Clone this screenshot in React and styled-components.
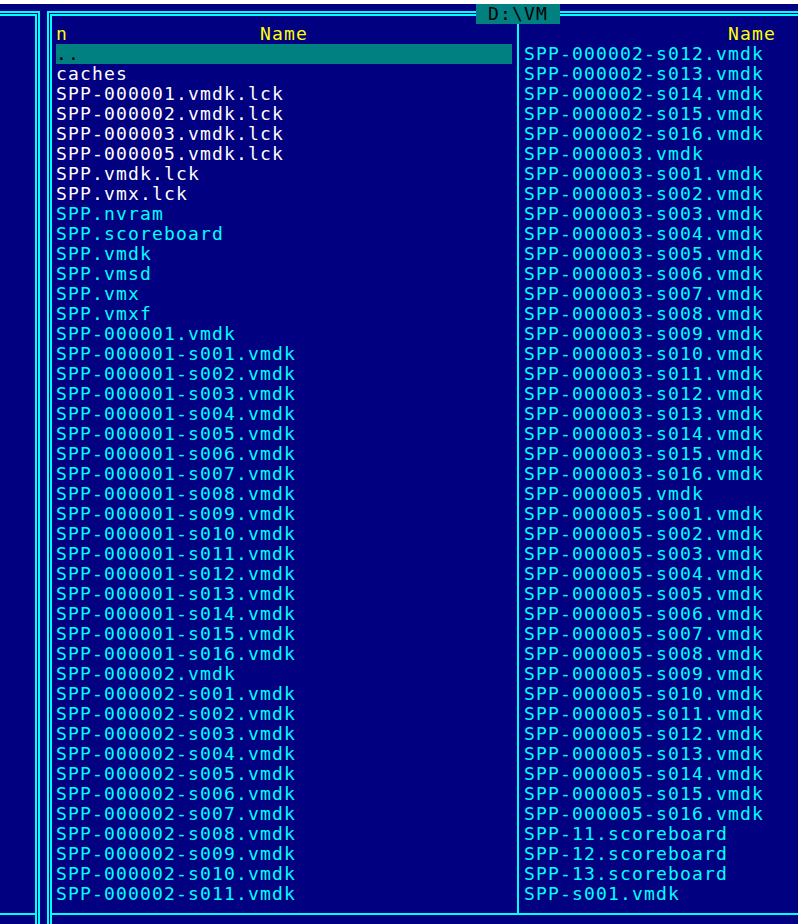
import styled, { createGlobalStyle } from 'styled-components';

const CYAN = '#00ffff';
const NAVY = '#000080';
const TEAL = '#008080';

// one straight stroke of a box-drawing glyph, drawn inside a 12x20 cell
const stroke = (x, y, w, h) =>
  `linear-gradient(${CYAN}, ${CYAN}) ${x} ${y} / ${w} ${h} no-repeat`;

const GlobalStyle = createGlobalStyle`
  html, body {
    margin: 0;
    background: #fff;
  }
`;

const Page = styled.div`
  padding-top: 4px;
`;

const Screen = styled.div`
  display: flex;
  height: 920px;
  overflow: hidden;
  background: ${NAVY};
  font-family: "DejaVu Sans Mono", "Liberation Mono", monospace;
  font-size: 18px;
  letter-spacing: 1.163px;
  line-height: 19px;
`;

const Stub = styled.div`
  flex: none;
  width: 44px;
  display: flex;
  flex-direction: column;
`;

const Panel = styled.div`
  flex: none;
  width: 948px;
  display: flex;
  flex-direction: column;
`;

const BorderRow = styled.div`
  flex: none;
  display: flex;
  height: 20px;
`;

const Middle = styled.div`
  flex: 1;
  display: flex;
  min-height: 0;
`;

const Gap = styled.div`
  flex: 1;
`;

const DoubleH = styled.div`
  flex: ${(p) => (p.$w ? 'none' : 1)};
  width: ${(p) => (p.$w ? `${p.$w}px` : 'auto')};
  background: ${stroke('0', '7px', '100%', '2px')}, ${stroke('0', '10px', '100%', '2px')};
`;

const SingleH = styled.div`
  flex: ${(p) => (p.$w ? 'none' : 1)};
  width: ${(p) => (p.$w ? `${p.$w}px` : 'auto')};
  background: ${stroke('0', '9px', '100%', '2px')};
`;

const DoubleV = styled.div`
  flex: none;
  width: 12px;
  background: ${stroke('3px', '0', '2px', '100%')}, ${stroke('6px', '0', '2px', '100%')};
`;

const SingleV = styled.div`
  flex: none;
  width: 12px;
  background: ${stroke('5px', '0', '2px', '100%')};
`;

const Cell = styled.div`
  flex: none;
  width: 12px;
`;

// ╔
const CornerTL = styled(Cell)`
  background: ${stroke('3px', '7px', '9px', '2px')}, ${stroke('3px', '7px', '2px', '13px')},
    ${stroke('6px', '10px', '6px', '2px')}, ${stroke('6px', '10px', '2px', '10px')};
`;

// ╗
const CornerTR = styled(Cell)`
  background: ${stroke('0', '7px', '8px', '2px')}, ${stroke('6px', '7px', '2px', '13px')},
    ${stroke('0', '10px', '5px', '2px')}, ${stroke('3px', '10px', '2px', '10px')};
`;

// ╟
const TeeRight = styled(Cell)`
  background: ${stroke('3px', '0', '2px', '100%')}, ${stroke('6px', '0', '2px', '100%')},
    ${stroke('8px', '9px', '4px', '2px')};
`;

// ╢
const TeeLeft = styled(Cell)`
  background: ${stroke('3px', '0', '2px', '100%')}, ${stroke('6px', '0', '2px', '100%')},
    ${stroke('0', '9px', '3px', '2px')};
`;

// ┴
const TeeUp = styled(Cell)`
  background: ${stroke('0', '9px', '100%', '2px')}, ${stroke('5px', '0', '2px', '11px')};
`;

const Title = styled.div`
  flex: none;
  height: 20px;
  background: ${TEAL};
  color: #000;
  white-space: pre;
`;

const Column = styled.div`
  flex: none;
  width: 456px;
  display: flex;
  flex-direction: column;
`;

const ColumnHeader = styled.div`
  display: grid;
  grid-template-columns: 1fr auto 1fr;
  height: 20px;
  color: #ffff00;
`;

const SortMark = styled.span`
  justify-self: start;
`;

const rowColors = {
  up: '#000',
  dir: '#fff',
  lock: '#fff',
  file: CYAN,
};

const FileRow = styled.div`
  height: 20px;
  white-space: pre;
  overflow: hidden;
  color: ${(p) => rowColors[p.$kind]};
  background: ${(p) => (p.$kind === 'up' ? TEAL : 'transparent')};
`;

const pad = (n) => String(n).padStart(3, '0');
const slices = (base, from, to) => {
  const out = [];
  for (let i = from; i <= to; i++) out.push({ name: `${base}-s${pad(i)}.vmdk`, kind: 'file' });
  return out;
};
const f = (name, kind = 'file') => ({ name, kind });

const leftFiles = [
  f('..', 'up'),
  f('caches', 'dir'),
  f('SPP-000001.vmdk.lck', 'lock'),
  f('SPP-000002.vmdk.lck', 'lock'),
  f('SPP-000003.vmdk.lck', 'lock'),
  f('SPP-000005.vmdk.lck', 'lock'),
  f('SPP.vmdk.lck', 'lock'),
  f('SPP.vmx.lck', 'lock'),
  f('SPP.nvram'),
  f('SPP.scoreboard'),
  f('SPP.vmdk'),
  f('SPP.vmsd'),
  f('SPP.vmx'),
  f('SPP.vmxf'),
  f('SPP-000001.vmdk'),
  ...slices('SPP-000001', 1, 16),
  f('SPP-000002.vmdk'),
  ...slices('SPP-000002', 1, 11),
];

const rightFiles = [
  ...slices('SPP-000002', 12, 16),
  f('SPP-000003.vmdk'),
  ...slices('SPP-000003', 1, 16),
  f('SPP-000005.vmdk'),
  ...slices('SPP-000005', 1, 16),
  f('SPP-11.scoreboard'),
  f('SPP-12.scoreboard'),
  f('SPP-13.scoreboard'),
  f('SPP-s001.vmdk'),
];

function FileColumn({ files, sorted }) {
  return (
    <Column>
      <ColumnHeader>
        <SortMark>{sorted ? 'n' : ''}</SortMark>
        <span>Name</span>
        <span />
      </ColumnHeader>
      {files.map((file) => (
        <FileRow key={file.name} $kind={file.kind}>
          {file.name}
        </FileRow>
      ))}
    </Column>
  );
}

export default function App() {
  return (
    <Page>
      <GlobalStyle />
      <Screen>
        <Stub>
          <BorderRow>
            <DoubleH $w={32} />
            <CornerTR />
          </BorderRow>
          <Middle>
            <Gap />
            <DoubleV />
          </Middle>
          <BorderRow>
            <SingleH />
            <TeeLeft />
          </BorderRow>
        </Stub>

        <Panel>
          <BorderRow>
            <CornerTL />
            <DoubleH />
            <Title>{' D:\\VM '}</Title>
            <DoubleH />
            <CornerTR />
          </BorderRow>
          <Middle>
            <DoubleV />
            <FileColumn files={leftFiles} sorted />
            <SingleV />
            <FileColumn files={rightFiles} />
            <DoubleV />
          </Middle>
          <BorderRow>
            <TeeRight />
            <SingleH $w={456} />
            <TeeUp />
            <SingleH />
            <TeeLeft />
          </BorderRow>
        </Panel>
      </Screen>
    </Page>
  );
}
